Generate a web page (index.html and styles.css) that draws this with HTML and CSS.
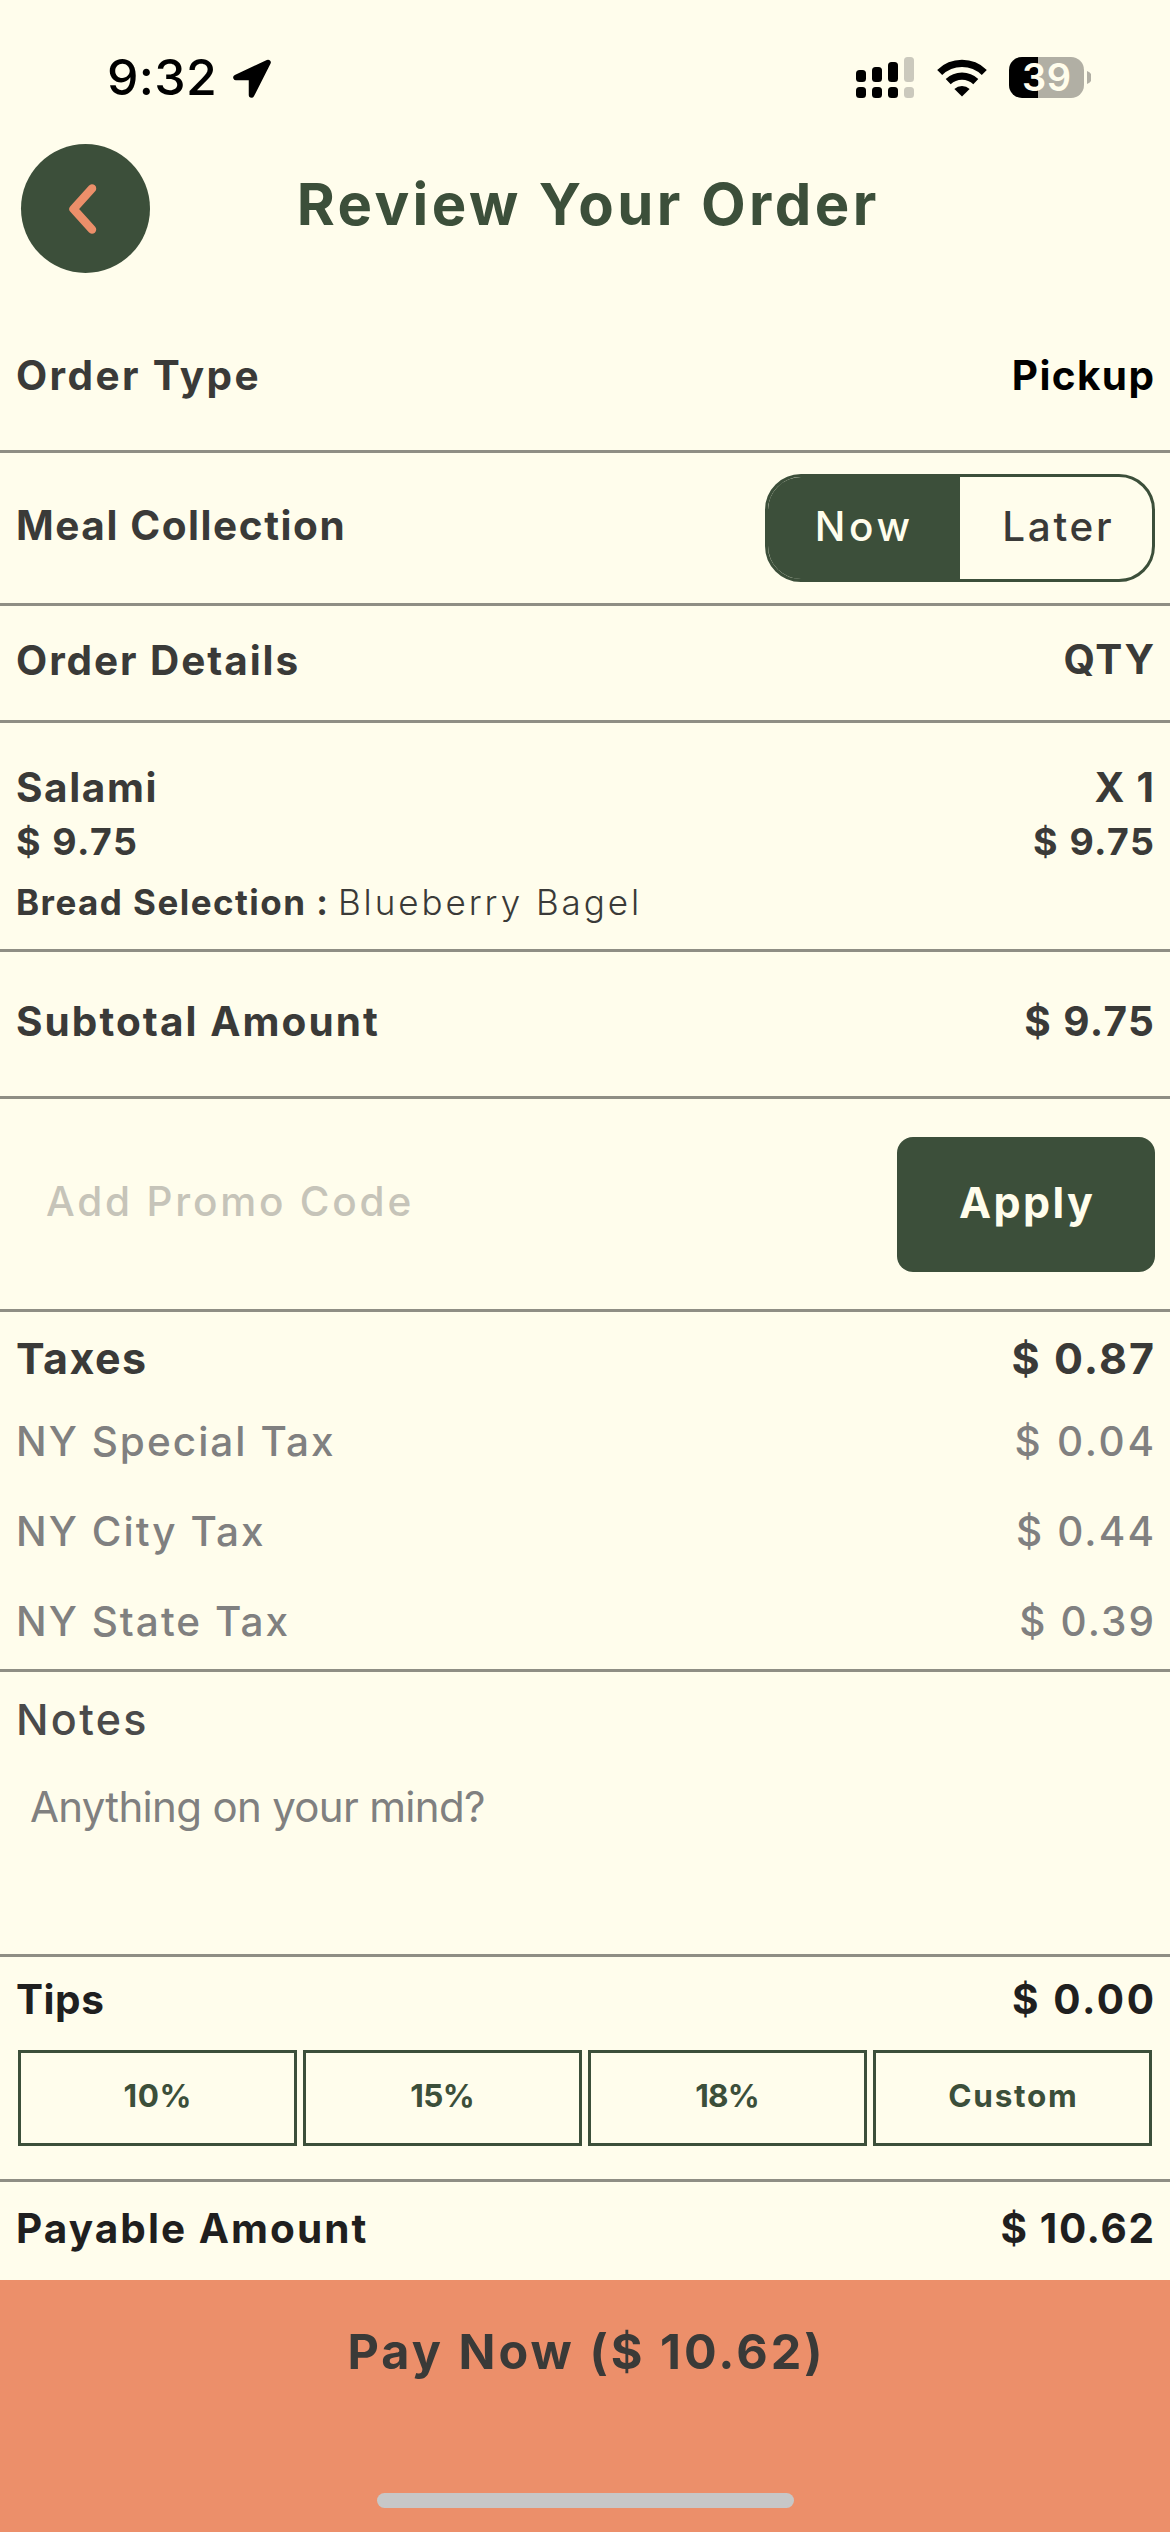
FILE: index.html
```html
<!DOCTYPE html>
<html lang="en">
<head>
<meta charset="utf-8">
<title>Review Your Order</title>
<link rel="stylesheet" href="styles.css">
</head>
<body>
<div class="screen">
  <div class="status-bar">
    <span class="clock t">9:32</span>
    <svg class="location" width="42" height="42" viewBox="0 0 42 42"><path d="M37 5.5 L5 20.5 H20.5 V38 Z" stroke="#000" stroke-width="5.5" stroke-linejoin="round" fill="#000"/></svg>
    <svg class="signal" width="58" height="41" viewBox="0 0 58 41">
      <rect x="0" y="13" width="10" height="12" rx="3.5"/><rect x="16" y="10" width="10" height="15" rx="3.5"/><rect x="32" y="5" width="10" height="20" rx="3.5"/>
      <rect x="0" y="30" width="10" height="11" rx="3.5"/><rect x="16" y="30" width="10" height="11" rx="3.5"/><rect x="32" y="30" width="10" height="11" rx="3.5"/>
      <rect class="dim" x="48" y="0" width="10" height="25" rx="3.5"/><rect class="dim" x="48" y="30" width="10" height="11" rx="3.5"/>
    </svg>
    <svg class="wifi" width="52" height="38" viewBox="0 0 52 38">
      <path d="M3.7 13.5 A32 32 0 0 1 48.3 13.5" stroke="#000" stroke-width="7.2" fill="none"/>
      <path d="M12.2 22.6 A20 20 0 0 1 39.8 22.6" stroke="#000" stroke-width="7.2" fill="none"/>
      <path d="M18.4 30 A11 11 0 0 1 33.6 30 L26 37.6 Z"/>
    </svg>
    <span class="battery"><span class="level t">39</span></span>
    <svg class="nub" width="4" height="13" viewBox="0 0 4 13"><path d="M0 0 A6.8 6.8 0 0 1 0 13 Z" fill="#b1afa4"/></svg>
  </div>

  <header class="header">
    <button class="back" aria-label="Back">
      <svg width="36" height="56" viewBox="0 0 36 56"><path d="M28 7.5 L9.5 28 L28 48.5" fill="none" stroke="#ec8f6a" stroke-width="8.5" stroke-linecap="round" stroke-linejoin="round"/></svg>
    </button>
    <h1 class="title t">Review Your Order</h1>
  </header>

  <section class="row type">
    <span class="label type-label t">Order Type</span><span class="label pickup t">Pickup</span>
  </section>

  <section class="row collection">
    <span class="label collection-label t">Meal Collection</span>
    <div class="toggle">
      <div class="option selected"><span class="now t">Now</span></div>
      <div class="option"><span class="later t">Later</span></div>
    </div>
  </section>

  <section class="row details">
    <span class="label details-label t">Order Details</span><span class="label qty t">QTY</span>
  </section>

  <section class="stack item">
    <div class="line"><span class="label salami t">Salami</span><span class="label count t">X 1</span></div>
    <div class="line price-line"><span class="price t">$ 9.75</span><span class="price t">$ 9.75</span></div>
    <div class="line choice-line"><span class="choice t">Bread Selection :</span><span class="choice-value t">Blueberry Bagel</span></div>
  </section>

  <section class="row subtotal">
    <span class="label amount-label t">Subtotal Amount</span><span class="label subtotal-value t">$ 9.75</span>
  </section>

  <section class="row promo">
    <span class="promo-input t">Add Promo Code</span>
    <button class="apply"><span class="t">Apply</span></button>
  </section>

  <section class="stack taxes">
    <div class="line taxes-total"><span class="taxes-label t">Taxes</span><span class="taxes-value t">$ 0.87</span></div>
    <div class="line tax"><span class="tax-name t">NY Special Tax</span><span class="tax-special t">$ 0.04</span></div>
    <div class="line tax"><span class="tax-name t">NY City Tax</span><span class="tax-value t">$ 0.44</span></div>
    <div class="line tax"><span class="tax-name t">NY State Tax</span><span class="tax-value t">$ 0.39</span></div>
  </section>

  <section class="stack notes">
    <span class="notes-label t">Notes</span>
    <span class="notes-input t">Anything on your mind?</span>
  </section>

  <section class="stack tips">
    <div class="line dark"><span class="label tips-label t">Tips</span><span class="label tips-value t">$ 0.00</span></div>
    <div class="tip-options">
      <button class="tip ten"><span class="t">10%</span></button>
      <button class="tip percent"><span class="t">15%</span></button>
      <button class="tip percent"><span class="t">18%</span></button>
      <button class="tip custom"><span class="t">Custom</span></button>
    </div>
  </section>

  <section class="row payable dark">
    <span class="label amount-label t">Payable Amount</span><span class="label payable-value t">$ 10.62</span>
  </section>

  <footer class="pay-bar">
    <span class="pay t">Pay Now ($ 10.62)</span>
    <div class="home-indicator"></div>
  </footer>
</div>
</body>
</html>
```
FILE: styles.css
```css
* { box-sizing: border-box; }

body {
  margin: 0;
  background: #fffdec;
  color: #3a3a38;
  font-family: Inter, "Liberation Sans", sans-serif;
  line-height: 48px;
}

button { margin: 0; padding: 0; border: 0; font: inherit; color: inherit; }

.screen { width: 1170px; height: 2532px; display: flex; flex-direction: column; overflow: hidden; }

/* Tracked text: the negative margin cancels the space after the last letter */
.t { --ls: 0px; white-space: pre; letter-spacing: var(--ls); margin-right: calc(-1 * var(--ls)); }

/* Status bar */
.status-bar { height: 144px; padding: 57px 79px 0 107px; display: flex; align-items: flex-start; color: #000; }
.clock { --ls: 0.3px; font-size: 50px; font-weight: 500; line-height: 40px; }
.location { margin: 0 auto 0 14px; }
.signal { margin-right: 22px; }
.dim { fill: #cbc9bd; }
.wifi { margin: 2px 21px 0 0; }
.battery { width: 75px; height: 41px; border-radius: 13px; background: linear-gradient(90deg, #000 29px, #b1afa4 29px); display: flex; justify-content: center; color: #fffdec; }
.level { --ls: 0.6px; font-size: 38px; font-weight: 600; line-height: 41px; }
.nub { margin: 14px 0 0 3px; }

/* Header */
.header { height: 129px; padding: 0 21px; display: grid; grid-template-columns: 129px 1fr 129px; align-items: center; }
.back { width: 129px; height: 129px; border-radius: 50%; background: #3c4f3a; display: flex; align-items: center; justify-content: center; padding-right: 8px; }
.title { --ls: 3.42px; margin-top: 0; margin-bottom: 9px; justify-self: center; padding-left: 3px; font-size: 58px; font-weight: 700; color: #3c4f3a; }

/* Sections */
.row, .stack { padding: 0 16px; border-bottom: 3px solid #8f8e84; flex: none; }
.row, .line { display: flex; justify-content: space-between; }
.stack { display: flex; flex-direction: column; }
.label { font-size: 40.5px; font-weight: 700; }
.dark { color: #1f1f1f; }

.type { height: 180px; padding-top: 79px; }
.type-label { --ls: 2.4px; }
.pickup { --ls: 1.37px; color: #000; }

.collection { height: 153px; padding-right: 15px; align-items: center; }
.collection-label { --ls: 1.56px; margin-bottom: 4px; }
.toggle { width: 390px; height: 108px; border: 3px solid #3c4f3a; border-radius: 36px; overflow: hidden; display: grid; grid-template-columns: 192px 1fr; }
.option { display: flex; align-items: center; justify-content: center; padding: 0 0 3px 2px; font-size: 40.5px; font-weight: 500; }
.selected { padding: 0 3px 3px 0; background: #3c4f3a; color: #fffdec; }
.now { --ls: 3.7px; }
.later { --ls: 2.7px; }

.details { height: 117px; padding-top: 31px; }
.details-label { --ls: 1.93px; }
.qty { --ls: 1.72px; margin-top: -1px; }

.item { height: 229px; padding-top: 41px; }
.salami { --ls: 1.6px; }
.count { --ls: 1.25px; }
.price-line { margin-top: 6px; }
.price { --ls: 1.45px; font-size: 37.5px; font-weight: 700; }
.choice-line { margin-top: 12px; justify-content: flex-start; gap: 10px; font-size: 35px; }
.choice { --ls: 1.45px; font-weight: 700; }
.choice-value { --ls: 2.95px; font-weight: 300; }

.subtotal { height: 147px; padding-top: 46px; }
.amount-label { --ls: 2.06px; }
.subtotal-value { --ls: 1.4px; }

.promo { height: 213px; padding: 0 15px 0 46px; align-items: center; }
.promo-input { --ls: 2.8px; margin-bottom: 4px; font-size: 40.5px; font-weight: 500; color: #c6c4b9; }
.apply { width: 258px; height: 135px; padding-bottom: 4px; border-radius: 16px; background: #3c4f3a; color: #fffdec; font-size: 43px; font-weight: 700; display: flex; align-items: center; justify-content: center; }
.apply .t { --ls: 2.4px; }

.taxes { height: 360px; padding-top: 22px; }
.taxes-total { margin-bottom: -6px; font-size: 43px; font-weight: 700; }
.taxes-label { --ls: 1.45px; }
.taxes-value { --ls: 2.04px; }
.tax { margin-top: 42px; font-size: 40.5px; font-weight: 500; color: #808080; }
.tax-name { --ls: 2.02px; }
.tax-special { --ls: 2.7px; }
.tax-value { --ls: 2.1px; }

.notes { height: 285px; padding-top: 23px; gap: 40px; }
.notes-label { --ls: 2.35px; font-size: 43px; font-weight: 500; color: #4a4a4a; }
.notes-input { --ls: -0.68px; padding-left: 14px; font-size: 42px; color: #808080; }

.tips { height: 225px; padding-top: 19px; }
.tips-label { --ls: 0.55px; }
.tips-value { --ls: 2.54px; }
.tip-options { margin: 26px 2px 0; display: grid; grid-template-columns: repeat(4, 1fr); gap: 6px; }
.tip { height: 96px; padding-bottom: 5px; border: 3px solid #3c4f3a; background: transparent; color: #3c4f3a; font-size: 31.5px; font-weight: 700; display: flex; align-items: center; justify-content: center; }
.ten .t { --ls: 0.59px; }
.percent .t { --ls: -0.7px; }
.custom .t { --ls: 1.7px; }

.payable { height: 98px; padding-top: 23px; border-bottom: 0; }
.payable-value { --ls: 1.61px; }

/* Pay bar */
.pay-bar { flex: 1; padding: 42px 0 24px; background: #ec8f6a; display: flex; flex-direction: column; align-items: center; justify-content: space-between; }
.pay { --ls: 3.05px; font-size: 48.5px; font-weight: 700; line-height: 60px; }
.home-indicator { width: 417px; height: 15px; border-radius: 8px; background: #c7c7c7; }
```
